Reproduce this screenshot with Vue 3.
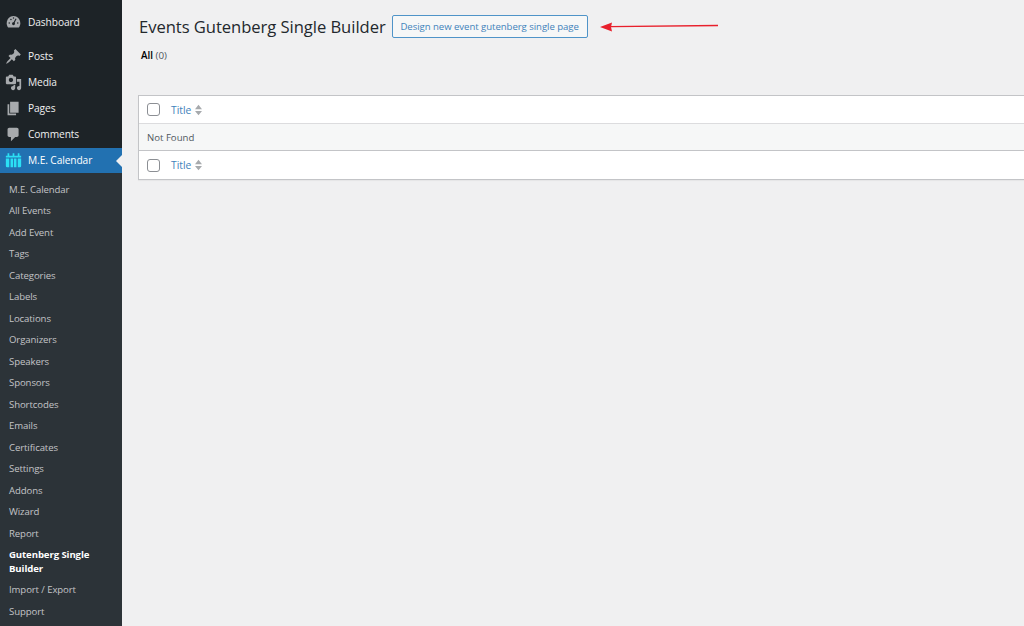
<script setup>
const top = [
  { label: 'Posts', icon: 'pin' },
  { label: 'Media', icon: 'media' },
  { label: 'Pages', icon: 'pages' },
  { label: 'Comments', icon: 'comment' }
]
const sub = ['M.E. Calendar','All Events','Add Event','Tags','Categories','Labels','Locations','Organizers','Speakers','Sponsors','Shortcodes','Emails','Certificates','Settings','Addons','Wizard','Report']
const sub2 = ['Import / Export','Support']
</script>

<template>
  <div class="page">
    <aside class="side">
      <div class="item dash">
        <svg class="ic" viewBox="0 0 20 20"><path d="M3.760 16h12.480c1.100-1.430 1.760-3.210 1.760-5.140C18 6.180 14.420 2.400 10 2.400S2 6.180 2 10.860c0 1.930.66 3.710 1.760 5.140Z" fill="#a7aaad"/><circle cx="10" cy="11.500" r="1.700" fill="#1d2327"/><path d="M10 11.500l3-6" stroke="#1d2327" stroke-width="1.300"/><circle cx="5" cy="10.500" r=".9" fill="#1d2327"/><circle cx="7" cy="6.500" r=".9" fill="#1d2327"/><circle cx="10" cy="4.700" r=".9" fill="#1d2327"/><circle cx="15" cy="10.500" r=".9" fill="#1d2327"/></svg>
        <span>Dashboard</span>
      </div>
      <div class="group">
        <div v-for="t in top" :key="t.label" class="item">
          <svg class="ic" viewBox="0 0 20 20" fill="#a7aaad">
            <path v-if="t.icon==='pin'" d="M10.440 3.020l1.820-1.820 6.360 6.350-1.830 1.820c-1.050-.68-2.480-.57-3.410.36l-.75.75c-.92.93-1.040 2.350-.35 3.410l-1.830 1.820-2.410-2.410-2.800 2.790c-.42.42-3.380 2.710-3.800 2.290s1.860-3.390 2.280-3.810l2.790-2.790L4.100 9.360l1.830-1.820c1.050.69 2.480.57 3.400-.36l.75-.75c.93-.92 1.050-2.350.36-3.410Z"/>
            <path v-else-if="t.icon==='media'" fill-rule="evenodd" d="M13 11V4c0-.55-.45-1-1-1h-1.670L9 1H5L3.670 3H2c-.55 0-1 .45-1 1v7c0 .55.45 1 1 1h10c.55 0 1-.45 1-1ZM7 4.500c1.380 0 2.500 1.120 2.500 2.500S8.380 9.500 7 9.500 4.500 8.380 4.500 7 5.620 4.500 7 4.500ZM14 6h5v10.500c0 1.380-1.120 2.500-2.500 2.500S14 17.880 14 16.500s1.120-2.500 2.500-2.500c.17 0 .34.020.5.050V9h-3V6Zm-4 8.050V13h2v3.500c0 1.380-1.120 2.500-2.500 2.500S7 17.880 7 16.500 8.120 14 9.500 14c.17 0 .34.020.5.050Z"/>
            <path v-else-if="t.icon==='pages'" d="M6 15V2h10v13H6Zm-1 1h8v2H3V5h2v11Z"/>
            <path v-else d="M5 2h9c1.100 0 2 .9 2 2v7c0 1.100-.9 2-2 2h-2l-5 5v-5H5c-1.100 0-2-.9-2-2V4c0-1.100.9-2 2-2Z"/>
          </svg>
          <span>{{ t.label }}</span>
        </div>
      </div>
      <div class="item current">
        <svg class="ic cal" viewBox="0 0 20 20" fill="#2be0f5"><path d="M3 1.500h2v3H3ZM9 1.500h2v3H9ZM15 1.500h2v3h-2ZM1 4.500h18v2H1Z"/><path d="M1 7.500h4V18H2.500A1.500 1.500 0 0 1 1 16.500ZM6.500 7.500h3V18h-3ZM10.500 7.500h3V18h-3ZM15 7.500h4v9a1.500 1.500 0 0 1-1.500 1.500H15Z"/></svg>
        <span>M.E. Calendar</span>
        <i class="notch"></i>
      </div>
      <ul class="sub">
        <li v-for="s in sub" :key="s">{{ s }}</li>
        <li class="on">Gutenberg Single Builder</li>
        <li v-for="s in sub2" :key="s">{{ s }}</li>
      </ul>
    </aside>
    <main class="main">
      <div class="head">
        <h1>Events Gutenberg Single Builder</h1>
        <a class="btn">Design new event gutenberg single page</a>
        <svg class="arrow" width="120" height="14" viewBox="0 0 120 14"><path d="M10 6.700 L118 5.500" stroke="#e8202c" stroke-width="1.300"/><path d="M0 7 L12 2.500 L11 7 L12 11.500Z" fill="#e8202c"/></svg>
      </div>
      <div class="filter"><b>All</b> <span>(0)</span></div>
      <div class="table">
        <div class="row"><i class="chk"></i><a>Title</a><svg class="sort" width="7" height="12" viewBox="0 0 8 12" fill="#a7aaad"><path d="M4 0l4 5H0ZM0 7h8l-4 5Z"/></svg></div>
        <div class="row nf"><span>Not Found</span></div>
        <div class="row last"><i class="chk"></i><a>Title</a><svg class="sort" width="7" height="12" viewBox="0 0 8 12" fill="#a7aaad"><path d="M4 0l4 5H0ZM0 7h8l-4 5Z"/></svg></div>
      </div>
    </main>
  </div>
</template>

<style>
html, body { margin: 0; background: #f0f0f1; overflow: hidden; }
</style>

<style scoped>
.page { display: flex; width: 1024px; height: 626px; overflow: hidden; font-family: "Open Sans", "Noto Sans", sans-serif; font-size: 10.2px; color: #3c434a; background: #f0f0f1; }
.side { width: 122px; flex: none; background: #1d2327; color: #f0f0f1; }
.item { display: flex; align-items: center; height: 26px; padding-left: 5px; gap: 6px; position: relative; }
.item span { letter-spacing: -.1px; }
.dash { margin-top: 9px; margin-bottom: 8px; }
.group { display: flex; flex-direction: column; }
.ic { width: 17px; height: 17px; flex: none; }
.current { background: #2271b1; color: #fff; height: 25px; margin-top: 1px; }
.current span { margin-bottom: 1px; }
.notch { position: absolute; right: 0; top: 7px; border: 6px solid transparent; border-right-color: #f0f0f1; border-left-width: 0; }
.sub { list-style: none; margin: 0; padding: 6px 0 0; background: #2c3338; color: #c3c4c7; height: 448px; font-size: 9.6px; }
.sub li { padding: 3.550px 9px; line-height: 14.400px; letter-spacing: -.1px; }
.sub li.on { color: #fff; font-weight: 700; padding-right: 20px; line-height: 14px; }
.main { flex: 1; min-width: 0; padding: 0 0 0 16px; }
.head { display: flex; align-items: center; height: 27px; margin-top: 13px; }
h1 { margin: 0 0 0 1px; font-size: 16.600px; font-weight: 400; color: #23282d; white-space: nowrap; letter-spacing: -.05px; }
.btn { box-sizing: border-box; margin-left: 6px; height: 23px; width: 196px; border: 1px solid #4f94c8; border-radius: 2px; background: #f6f7f7; color: #3f83bb; font-size: 9.600px; display: flex; align-items: center; justify-content: center; white-space: nowrap; letter-spacing: -.05px; }
.arrow { margin-left: 12px; }
.filter { margin: 9px 0 0 3px; font-size: 9.800px; line-height: 14px; color: #50575e; }
.filter b { color: #000; font-weight: 600; }
.table { box-sizing: border-box; margin-top: 32px; border: 1px solid #c3c4c7; background: #fff; width: 900px; height: 85px; box-shadow: 0 1px 1px rgba(0,0,0,.04); }
.row { box-sizing: border-box; height: 28px; display: flex; align-items: center; padding-left: 8px; font-size: 10.300px; border-bottom: 1px solid #dcdcde; }
.row a { color: #3f83bb; margin-left: 11px; }
.row.nf { height: 27px; background: #f6f7f7; padding-left: 8px; border-bottom: 1px solid #c3c4c7; color: #50575e; font-size: 9.600px; }
.row.nf span { margin-top: 1px; }
.row.last { border-bottom: 0; }
.chk { box-sizing: border-box; width: 13px; height: 13px; border: 1px solid #8c8f94; border-radius: 3px; background: #fff; }
.sort { margin-left: 4px; }
</style>
